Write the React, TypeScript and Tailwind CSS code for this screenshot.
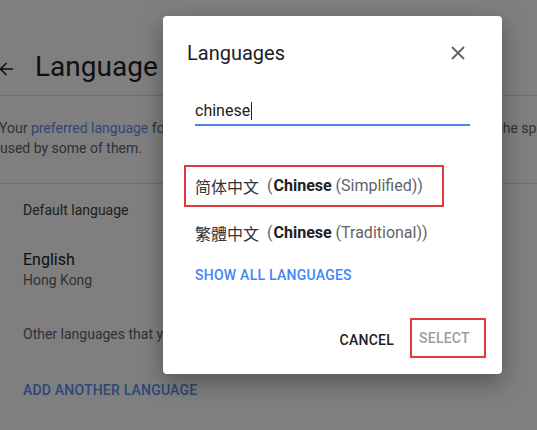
import React from "react";

const ROBOTO = "font-['Roboto',sans-serif]";

function BackArrow() {
  return (
    <svg width="16" height="16" viewBox="0 0 16 16" className="shrink-0 -ml-[2px]">
      <path d="M15 8H2.5M8.5 2L2.5 8l6 6" fill="none" stroke="#202124" strokeWidth="1.6" />
    </svg>
  );
}

function CloseIcon() {
  return (
    <svg width="14" height="14" viewBox="0 0 14 14">
      <path d="M1 1l12 12M13 1L1 13" stroke="#5f6368" strokeWidth="1.8" />
    </svg>
  );
}

function LanguageRow({
  native,
  variant,
  boxed,
  cjk,
}: {
  native: string;
  variant: string;
  boxed?: boolean;
  cjk: string;
}) {
  return (
    <div
      className={`flex h-[42px] w-[260px] items-center border-2 pl-[9px] text-[16px] leading-6 ${
        boxed ? "border-[#e0393e]" : "border-transparent"
      }`}
    >
      <span className={`${cjk} text-[#333]`}>{native}</span>
      <span className="ml-[8px] text-[#5f6368]">(</span>
      <span className="ml-px font-bold text-[#202124]">Chinese</span>
      <span className="text-[#5f6368]">&nbsp;({variant}))</span>
    </div>
  );
}

export default function App() {
  return (
    <div className={`relative h-[430px] w-[537px] overflow-hidden bg-white ${ROBOTO}`}>
      {/* settings page underneath */}
      <div className="flex flex-col">
        <div className="flex h-[96px] items-end gap-[21px] border-b border-[#dadce0] pb-[10px]">
          <div className="mb-[8px]">
            <BackArrow />
          </div>
          <h1 className="text-[28px] leading-9 text-[#202124]">Language</h1>
        </div>

        <div className="mt-[22px] text-[14px] leading-5 text-[#5f6368]">
          <p className="-ml-[1px] whitespace-nowrap">
            Your <span className="text-[#5a8ff0]">preferred language</span> for Google services, and other languages you know. Set the speech
          </p>
          <p>used by some of them.</p>
        </div>

        <div className="mt-[25px] -ml-[8px] w-[600px] rounded-lg border border-[#dadce0] pl-[30px] pb-[30px]">
          <p className="pt-[16px] text-[14px] leading-5 text-[#3c4043]">Default language</p>
          <p className="mt-[28px] text-[16px] leading-6 text-[#202124]">English</p>
          <p className="-mt-[2px] text-[14px] leading-5 text-[#5f6368]">Hong Kong</p>
          <p className="mt-[34px] text-[14px] leading-5 text-[#5f6368]">
            Other languages that you understand
          </p>
          <p className="mt-[36px] text-[14px] font-medium leading-5 tracking-[0.2px] text-[#5a8ff0]">
            ADD ANOTHER LANGUAGE
          </p>
        </div>
      </div>

      {/* scrim */}
      <div className="absolute inset-0 bg-black/50" />

      {/* dialog */}
      <div className="absolute left-[163px] top-[16px] flex h-[358px] w-[339px] flex-col rounded-[4px] bg-white shadow-[0_8px_24px_rgba(0,0,0,0.35)]">
        <div className="flex items-center justify-between pl-[24px] pr-[32px] pt-[23px]">
          <h2 className="text-[20px] leading-7 text-[#202124]">Languages</h2>
          <button className="flex h-[24px] w-[24px] items-center justify-center">
            <CloseIcon />
          </button>
        </div>

        <div className="mx-[32px] mt-[33px] flex h-[26px] items-center border-b-2 border-[#4a86e8] pb-[2px] text-[16px] leading-6 text-[#202124]">
          <span>chinese</span>
          <span className="ml-px h-[18px] w-px bg-[#202124]" />
        </div>

        <div className="ml-[21px] mt-[39px] flex flex-col gap-[5px]">
          <LanguageRow native="简体中文" variant="Simplified" boxed cjk="font-['Noto_Sans_CJK_SC',sans-serif]" />
          <LanguageRow native="繁體中文" variant="Traditional" cjk="font-['Noto_Sans_CJK_TC',sans-serif]" />
        </div>

        <p className="ml-[32px] mt-[11px] text-[14px] font-medium leading-5 tracking-[0.25px] text-[#4285f4]">
          SHOW ALL LANGUAGES
        </p>

        <div className="mt-auto mb-[16px] mr-[16px] flex items-center justify-end gap-[16px]">
          <button className="mt-[3px] text-[14px] font-medium leading-5 tracking-[0.25px] text-[#202124]">CANCEL</button>
          <button className="flex h-[40px] w-[76px] items-center border-2 border-[#e0393e] pl-[7px] text-[14px] font-medium leading-5 tracking-[0.25px] text-[#9e9e9e]">
            SELECT
          </button>
        </div>
      </div>
    </div>
  );
}
